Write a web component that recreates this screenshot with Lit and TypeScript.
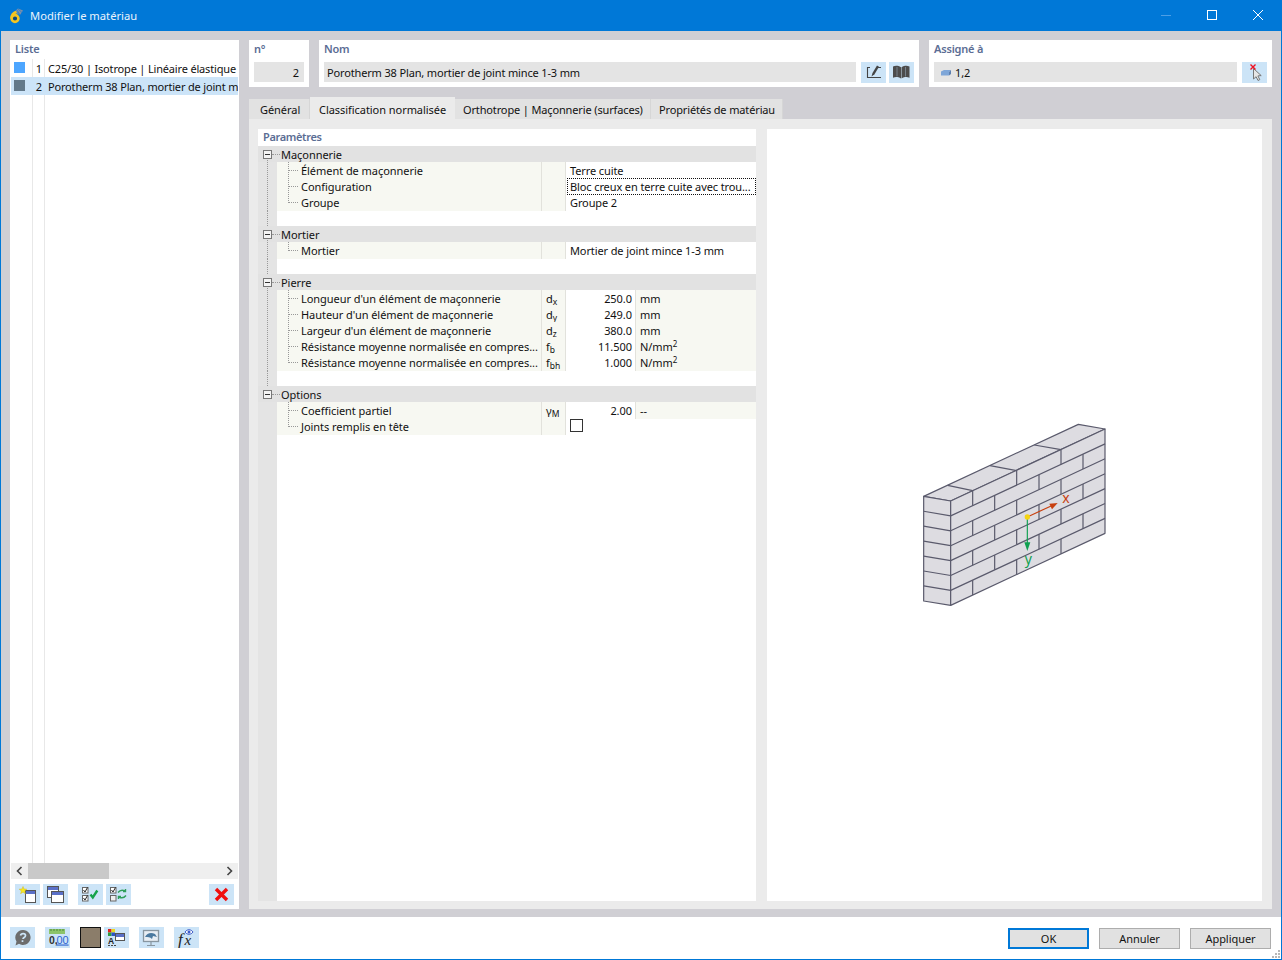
import { LitElement, html, css, svg } from "lit";
import { customElement } from "lit/decorators.js";

type Row =
  | { k: "group"; name: string; last?: boolean }
  | { k: "blank" }
  | { k: "text"; name: string; val: string; focus?: boolean; end?: boolean }
  | { k: "num"; name: string; sym: any; val: string; unit: any; end?: boolean; tail?: boolean }
  | { k: "check"; name: string; end?: boolean; tail?: boolean };

const N2 = html`N/mm<sup>2</sup>`;
const rows: Row[] = [
  { k: "group", name: "Maçonnerie" },
  { k: "text", name: "Élément de maçonnerie", val: "Terre cuite" },
  { k: "text", name: "Configuration", val: "Bloc creux en terre cuite avec trou...", focus: true },
  { k: "text", name: "Groupe", val: "Groupe 2", end: true },
  { k: "blank" },
  { k: "group", name: "Mortier" },
  { k: "text", name: "Mortier", val: "Mortier de joint mince 1-3 mm", end: true },
  { k: "blank" },
  { k: "group", name: "Pierre" },
  { k: "num", name: "Longueur d'un élément de maçonnerie", sym: html`d<sub>x</sub>`, val: "250.0", unit: "mm" },
  { k: "num", name: "Hauteur d'un élément de maçonnerie", sym: html`d<sub>y</sub>`, val: "249.0", unit: "mm" },
  { k: "num", name: "Largeur d'un élément de maçonnerie", sym: html`d<sub>z</sub>`, val: "380.0", unit: "mm" },
  { k: "num", name: "Résistance moyenne normalisée en compres...", sym: html`f<sub>b</sub>`, val: "11.500", unit: N2 },
  { k: "num", name: "Résistance moyenne normalisée en compres...", sym: html`f<sub>bh</sub>`, val: "1.000", unit: N2, end: true },
  { k: "blank" },
  { k: "group", name: "Options", last: true },
  { k: "num", name: "Coefficient partiel", sym: html`γ<sub>M</sub>`, val: "2.00", unit: "--", tail: true },
  { k: "check", name: "Joints remplis en tête", end: true, tail: true },
];

const win = (x: number, y: number, w: number, h: number) => svg`
  <rect x=${x + 0.5} y=${y + 0.5} width=${w} height=${h} fill="#fff" stroke="#555"/>
  <rect x=${x + 1} y=${y + 1} width=${w - 1} height="3" fill="#5a70c8"/>`;

const box = (y: number, on: boolean, fill = "#fff") => svg`
  <rect x="4.500" y=${y + 0.5} width="5.500" height="5.500" fill=${fill} stroke="#666"/>
  ${on ? svg`<path d="M5.500 ${y + 3}l1.500 2 2.500-4.500" fill="none" stroke="#222"/>` : ""}`;

const icons: Record<string, any> = {
  newWin: svg`${win(10, 6, 10, 12)}<path d="M8 2.500l1 2.500 2.800.2-2.200 1.700.8 2.800-2.400-1.600-2.400 1.600.8-2.800L4.200 5.200 7 5z" fill="#f8e81c" stroke="#d0b820" stroke-width=".5"/>`,
  copyWin: svg`${win(4, 2, 11, 11)}${win(8, 7, 12, 11)}`,
  checks: svg`${box(3, true)}${box(11, true)}<path d="M12.500 10.500l2.300 3 4.500-7" fill="none" stroke="#16a34a" stroke-width="2.400"/>`,
  checksSwap: svg`${box(3, true)}${box(11, false, "#eee")}<path d="M12 8.500c2-2.500 5-2.500 7-1.500M19.500 5v2.500H17M20 11.500c-2 2.500-5 2.500-7 1.500M12.500 15v-2.500H15" fill="none" stroke="#2f9e5a" stroke-width="1.400"/>`,
  del: svg`<path d="M7 5l11 11M18 5L7 16" stroke="#f01010" stroke-width="3.400" fill="none"/>`,
  edit: svg`<path d="M9 5.500H6.500v10H20M17 5.500h3" fill="none" stroke="#444" stroke-width="1.100"/><path d="M10.500 14.500l1-3.500 4.500-7.500 2 1.200-4.500 7.500z" fill="#444"/>`,
  book: svg`<path d="M4 4.500c2.500-1 5-1 8 .8v11.200c-3-1.800-5.500-1.800-8-.8zM20.500 4.500c-2.500-1-5-1-8 .8v11.200c3-1.800 5.500-1.800 8-.8z" fill="#4c4c4c"/><path d="M8 5v9.500M16.500 5v9.500" stroke="#8a9aa8" stroke-width=".7"/>`,
  cursor: svg`<path d="M11.500 6.500v10.500l2.600-2.300 1.900 3.800 1.800-.9-1.900-3.700 3.300-.3z" fill="#e6e6e6" stroke="#777"/><path d="M8.500 2.500l5 5M13.500 2.500l-5 5" stroke="#f01020" stroke-width="1.400"/>`,
  help: svg`<path d="M13 3a7.500 7.500 0 1 1-4 13.800L5.500 18.500l1-4A7.500 7.500 0 0 1 13 3z" fill="#6c6c6c"/><path d="M10.500 8.500c.5-2.500 5-2.500 5 0 0 2-2.500 2-2.500 3.500M12.500 13.200v1.800" stroke="#cce4f7" stroke-width="1.700" fill="none"/>`,
  nums: svg`<rect x="4" y="2" width="16" height="5" fill="#8cc46a"/><path d="M6 2v2M9 2v2M12 2v2M15 2v2M18 2v2" stroke="#4c8a3a"/><text x="4" y="16.500" font-size="10.500" font-weight="700" fill="#333" font-family="Liberation Sans">0,</text><text x="11.500" y="16.500" font-size="11" fill="#2a62d0" font-family="Liberation Sans" text-decoration="underline">00</text>`,
  colors: svg`<rect x="4" y="2" width="3.500" height="3.500" fill="#e02020"/><rect x="7.500" y="2" width="3.500" height="3.500" fill="#e8d820"/><rect x="4" y="5.500" width="3.500" height="3.500" fill="#2c9c3c"/><rect x="7.500" y="5.500" width="3.500" height="3.500" fill="#2a52c8"/>${win(11, 6, 9, 7)}<text x="4" y="16.500" font-size="8.500" font-weight="700" fill="#222" font-family="Liberation Sans">A</text><path d="M4 18.500h9" stroke="#444" stroke-dasharray="2 1"/>`,
  monitor: svg`<rect x="4.500" y="3.500" width="15" height="11" fill="#e8eef4" stroke="#8896a0" stroke-width="1.300"/><path d="M6 10c2-4 6-5 10-3l2 3-4-1-1 3c-2-2-4-2-7-2z" fill="#4c7aa0"/><path d="M12 15v3M8 18.500h8" stroke="#8896a0" stroke-width="1.200"/>`,
  fx: svg`<text x="4" y="18" font-size="17" font-style="italic" fill="#222" font-family="Liberation Serif">f</text><text x="10.500" y="18" font-size="15" font-style="italic" fill="#222" font-family="Liberation Serif">x</text><path d="M11 5c2-3 6-3 8 0-2 3-6 3-8 0z" fill="#fff" stroke="#3a5ac8"/><circle cx="15" cy="5" r="1.500" fill="#3a5ac8"/>`,
};

const ico = (n: string, cls = "") => html`<span class="ib ${cls}"><svg viewBox="0 0 25 21" width="25" height="21">${icons[n]}</svg></span>`;

function wall() {
  const s = -0.4665;
  const yAt = (x: number, k: number) => 258 + (x - 122) * s + k * 44.7;
  const parts: any[] = [];
  for (let k = 1; k < 7; k++) {
    const a = 244 + k * 44.8;
    const b = yAt(122, k);
    const c = yAt(585, k);
    parts.push(svg`<path d="M41 ${a}L122 ${b}L585 ${c}"/>`);
  }
  for (let k = 0; k < 7; k++) {
    const xs = k % 2 === 0 ? [188, 320, 453] : [254, 387, 519];
    for (const x of xs) parts.push(svg`<path d="M${x} ${yAt(x, k)}V${yAt(x, k + 1)}"/>`);
  }
  return svg`
    <svg class="wall" viewBox="0 0 630 600" width="210" height="200">
      <g fill="#dddce1" stroke="#5a5a6c" stroke-width="3.600" stroke-linejoin="round">
        <path d="M41 244L505 28L585 42L122 258Z"/>
        <path d="M41 244L122 258V571L41 558Z"/>
        <path d="M122 258L585 42V355L122 571Z"/>
        <g fill="none">
          <path d="M113 211L188 227M240 152L320 167M373 90L453 104"/>
          ${parts}
        </g>
      </g>
      <path d="M352 306L425 272" stroke="#c8400f" stroke-width="3.500"/>
      <path d="M443 264L418 266L426 283Z" fill="#c8400f"/>
      <path d="M352 306V385" stroke="#10a050" stroke-width="3.500"/>
      <path d="M352 408L343 382H361Z" fill="#10a050"/>
      <circle cx="352" cy="306" r="8" fill="#f5d410"/>
      <text x="457" y="264" class="ax" fill="#c8400f">x</text>
      <text x="344" y="448" class="ax" fill="#10a050">y</text>
    </svg>`;
}

@customElement("app-root")
export class AppRoot extends LitElement {
  static styles = css`
    :host {
      display: block; width: 1282px; height: 960px; box-sizing: border-box;
      border: 1px solid #0078d7; border-top: 0; background: #fff; overflow: hidden;
      font: 11px "Noto Sans", sans-serif; color: #111; letter-spacing: -.05px;
    }
    .title { height: 31px; padding-bottom: 1px; box-sizing: border-box; background: #0078d7; display: flex; align-items: center; color: #fff; }
    .title .logo { margin: 1px 0 0 7px; width: 16px; height: 16px; }
    .title .t { margin-left: 6px; font-size: 11.200px; letter-spacing: 0; color: #eaf3fc; }
    .title .wc { margin: -1px 0 -1px auto; display: flex; }
    .wc svg { display: block; width: 46px; height: 31px; }
    .body { height: 886px; background: #d0cfd4; padding: 9px 9px 8px 9px; box-sizing: border-box; display: flex; gap: 10px; }
    .list { width: 229px; background: #fff; box-sizing: border-box; padding: 0 1px 4px; display: flex; flex-direction: column; position: relative; }
    .lab { font-weight: 600; color: #5b6d94; height: 19px; line-height: 18px; padding-left: 4px; letter-spacing: -.2px; }
    .lrows { flex: 1; position: relative; overflow: hidden; background:
      linear-gradient(#e8e8e8,#e8e8e8) 21px 0/1px 100% no-repeat,
      linear-gradient(#e8e8e8,#e8e8e8) 33px 0/1px 100% no-repeat; }
    .lrow { height: 18px; display: flex; align-items: center; white-space: nowrap; }
    .lrow.sel { background: #cce4f8; }
    .sw { width: 11px; height: 11px; margin: -1px 0 0 3px; flex: none; }
    .blue { background: #4da6ff; } .slate { background: #63798a; }
    .ln { width: 17px; text-align: right; flex: none; }
    .lt { margin-left: 6px; letter-spacing: -.17px; }
    .hs { height: 16px; background: #efefef; display: flex; align-items: stretch; justify-content: space-between; flex: none; }
    .hs .th { position: absolute; left: 18px; width: 81px; height: 16px; background: #c9c9c9; }
    .hs .a { width: 17px; display: flex; align-items: center; justify-content: center; position: relative; }
    .ltools { display: flex; height: 21px; margin: 5px 0 0 4px; flex: none; }
    .ib { display: inline-flex; width: 25px; height: 21px; background: #cce4f7; flex: none; }
    .ib svg { display: block; }
    .m3 { margin-left: 3px; } .m10 { margin-left: 10px; } .auto { margin-left: auto; margin-right: 4px; }
    .main { width: 1023px; display: flex; flex-direction: column; }
    .top { display: flex; gap: 10px; height: 47px; flex: none; }
    .panel { background: #fff; padding: 0 5px; box-sizing: border-box; }
    .panel .lab { padding-left: 0; height: 22px; }
    .p1 { width: 60px; } .p2 { width: 600px; } .p3 { width: 343px; }
    .fr { display: flex; gap: 5px; }
    .fld { height: 20px; background: #e4e4e4; line-height: 21px; padding: 0 3px; flex: 1; white-space: nowrap; letter-spacing: -.15px; }
    .fr .mg { gap: 3px; display: flex; }
    .num { text-align: right; padding-right: 5px; }
    .arrow3d { margin: 0 3px; }
    .tabs { display: flex; margin-top: 10px; height: 22px; flex: none; align-items: flex-end; }
    .tab { height: 20px; background: #e2e2e2; line-height: 22px; padding-left: 9px; box-sizing: border-box; white-space: nowrap; border-right: 1px solid #d6d6d6; }
    .tab.on { height: 22px; background: #ebebeb; line-height: 26px; border-right: 0; }
    .t1 { width: 61px; padding-left: 11px; } .t2 { width: 145px; }
    .t3 { width: 196px; padding-left: 8px; letter-spacing: -.14px; }
    .t4 { width: 132px; padding-left: 8px; letter-spacing: -.14px; }
    .content { flex: 1; background: #ebebeb; padding: 10px 10px 8px 9px; display: flex; gap: 11px; min-height: 0; }
    .left { width: 498px; background: #fff; display: flex; flex-direction: column; position: relative; }
    .phead { height: 17px; font-weight: 600; color: #5b6d94; padding-left: 5px; line-height: 15px; flex: none; letter-spacing: -.35px; }
    .tree { flex: 1; background: linear-gradient(#e4e4e4,#e4e4e4) 0 0/19px 100% no-repeat; }
    .row { height: 16px; display: grid; grid-template-columns: 19px 265px 24px 70px 120px; line-height: 17px; white-space: nowrap; }
    .row > div { position: relative; min-width: 0; }
    .row.group { background: #e2e2e2; }
    .row.group .gn { grid-column: 2 / 6; padding-left: 4px; }
    .g::before { content: ""; position: absolute; left: 9px; top: 0; bottom: 0; border-left: 1px dotted #999; }
    .row.group .g::before { top: 8px; }
    .row.group.last .g::before, .row.tail .g::before { display: none; }
    .box { position: absolute; left: 5px; top: 4px; width: 7px; height: 7px; border: 1px solid #777; background: #f4f4f4; z-index: 1; }
    .box::after { content: ""; position: absolute; left: 1px; right: 1px; top: 3px; border-top: 1px solid #333; }
    .g .dash { position: absolute; left: 14px; right: -3px; top: 8px; border-top: 1px dotted #999; }
    .nm { background: #f7f8f2; border-right: 1px solid #e2e2dc; padding-left: 24px; }
    .nm::before { content: ""; position: absolute; left: 11px; top: 0; bottom: 0; border-left: 1px dotted #999; }
    .end .nm::before { bottom: 8px; }
    .nm::after { content: ""; position: absolute; left: 11px; width: 10px; top: 8px; border-top: 1px dotted #999; }
    .sy { background: #f7f8f2; border-right: 1px solid #e2e2dc; padding-left: 4px; box-sizing: border-box; }
    .sy sub { font-size: 8.500px; line-height: 0; vertical-align: -1.500px; letter-spacing: 0; }
    .val { text-align: right; padding-right: 3px; border-right: 1px solid #e2e2dc; box-sizing: border-box; }
    .un { background: #f7f8f2; padding-left: 4px; }
    .un sup { font-size: 8px; line-height: 0; vertical-align: 4px; }
    .wide { grid-column: 4 / 6; padding-left: 4px; letter-spacing: -.11px; }
    .wide.focus { outline: 1px dotted #111; outline-offset: -1px; margin-left: 1px; padding-left: 3px; }
    .cbx { width: 11px; height: 11px; border: 1px solid #333; margin: 1px 0 0 0; background: #fff; }
    .right { flex: 1; background: #fff; display: flex; align-items: center; justify-content: center; }
    .ax { font: 42px "Noto Sans", sans-serif; }
    .foot { height: 41px; box-sizing: border-box; display: flex; align-items: flex-start; padding: 10px 10px 0 9px; position: relative; }
    .swatch { width: 19px; height: 19px; background: #8b7d6a; border: 1px solid #111; margin-left: 10px; margin-right: 3px; }
    .btn { width: 81px; height: 21px; box-sizing: border-box; border: 1px solid #adadad; background: #e1e1e1; text-align: center; line-height: 20px; margin: 1px 0 0 10px; }
    .btn.def { border: 2px solid #0078d7; line-height: 18px; }
    .sp { margin-left: auto; }
    .grip { position: absolute; right: 1px; bottom: 0; width: 9px; height: 9px; }
  `;

  row(r: Row) {
    if (r.k === "blank") return html`<div class="row"><div class="g"></div></div>`;
    if (r.k === "group")
      return html`<div class="row group ${r.last ? "last" : ""}"><div class="g"><span class="box"></span><span class="dash"></span></div><div class="gn">${r.name}</div></div>`;
    const e = `${r.end ? "end" : ""} ${(r as any).tail ? "tail" : ""}`;
    if (r.k === "text")
      return html`<div class="row ${e}"><div class="g"></div><div class="nm">${r.name}</div><div class="sy"></div><div class="wide ${r.focus ? "focus" : ""}">${r.val}</div></div>`;
    if (r.k === "check")
      return html`<div class="row ${e}"><div class="g"></div><div class="nm">${r.name}</div><div class="sy"></div><div class="wide"><div class="cbx"></div></div></div>`;
    return html`<div class="row ${e}"><div class="g"></div><div class="nm">${r.name}</div><div class="sy">${r.sym}</div><div class="val">${r.val}</div><div class="un">${r.unit}</div></div>`;
  }

  render() {
    return html`
      <div class="title">
        <svg class="logo" viewBox="0 0 16 16">
          <path d="M6 4l4-3.500 5 2-3 4.500z" fill="#7f8fa8"/>
          <path d="M7.500 2.500l4 3.500M10 1l4 3.500M12 7l-3-5" stroke="#0078d7" stroke-width=".5" fill="none"/>
          <circle cx="7" cy="10.500" r="3.400" fill="#0a4a80" stroke="#f4c520" stroke-width="2.600"/>
          <path d="M3.500 10.500c0-3.500 1.500-5.500 5-6.500" fill="none" stroke="#f4c520" stroke-width="2.600"/>
        </svg>
        <span class="t">Modifier le matériau</span>
        <div class="wc">
          <svg viewBox="0 0 46 31"><path d="M18 15.500h10" stroke="#4d9fe6"/></svg>
          <svg viewBox="0 0 46 31"><rect x="18.500" y="10.500" width="9" height="9" fill="none" stroke="#fff"/></svg>
          <svg viewBox="0 0 46 31"><path d="M18 10l10 10M28 10L18 20" stroke="#fff"/></svg>
        </div>
      </div>
      <div class="body">
        <div class="list">
          <div class="lab">Liste</div>
          <div class="lrows">
            <div class="lrow"><span class="sw blue"></span><span class="ln">1</span><span class="lt">C25/30 | Isotrope | Linéaire élastique</span></div>
            <div class="lrow sel"><span class="sw slate"></span><span class="ln">2</span><span class="lt">Porotherm 38 Plan, mortier de joint mince 1-3 mm</span></div>
          </div>
          <div class="hs">
            <span class="th"></span>
            <span class="a"><svg width="8" height="10" viewBox="0 0 8 10"><path d="M5.500 1l-4 4 4 4" fill="none" stroke="#444" stroke-width="1.600"/></svg></span>
            <span class="a"><svg width="8" height="10" viewBox="0 0 8 10"><path d="M1.500 1l4 4-4 4" fill="none" stroke="#444" stroke-width="1.600"/></svg></span>
          </div>
          <div class="ltools">
            ${ico("newWin")}${ico("copyWin", "m3")}${ico("checks", "m10")}${ico("checksSwap", "m3")}${ico("del", "auto")}
          </div>
        </div>
        <div class="main">
          <div class="top">
            <div class="panel p1"><div class="lab">n°</div><div class="fr"><div class="fld num">2</div></div></div>
            <div class="panel p2"><div class="lab">Nom</div><div class="fr"><div class="fld">Porotherm 38 Plan, mortier de joint mince 1-3 mm</div><div class="mg">${ico("edit")}${ico("book")}</div></div></div>
            <div class="panel p3"><div class="lab">Assigné à</div><div class="fr"><div class="fld">
              <svg class="arrow3d" width="12" height="8" viewBox="0 0 12 8"><path d="M1 2.500L4 1h7L9 3v3.500H1z" fill="#7ea6d8"/><path d="M9 3l2-2v4L9 6.500z" fill="#5c7fb0"/></svg>1,2</div>${ico("cursor")}</div></div>
          </div>
          <div class="tabs">
            <div class="tab t1">Général</div>
            <div class="tab t2 on">Classification normalisée</div>
            <div class="tab t3">Orthotrope | Maçonnerie (surfaces)</div>
            <div class="tab t4">Propriétés de matériau</div>
          </div>
          <div class="content">
            <div class="left">
              <div class="phead">Paramètres</div>
              <div class="tree">${rows.map((r) => this.row(r))}</div>
            </div>
            <div class="right">${wall()}</div>
          </div>
        </div>
      </div>
      <div class="foot">
        ${ico("help")}${ico("nums", "m10")}
        <div class="swatch"></div>
        ${ico("colors")}${ico("monitor", "m10")}${ico("fx", "m10")}
        <div class="btn def sp">OK</div>
        <div class="btn">Annuler</div>
        <div class="btn">Appliquer</div>
        <svg class="grip" viewBox="0 0 9 9"><path d="M7 1h2v2H7zM4 4h2v2H4zM7 4h2v2H7zM1 7h2v2H1zM4 7h2v2H4zM7 7h2v2H7z" fill="#b8b8b8"/></svg>
      </div>
    `;
  }
}
